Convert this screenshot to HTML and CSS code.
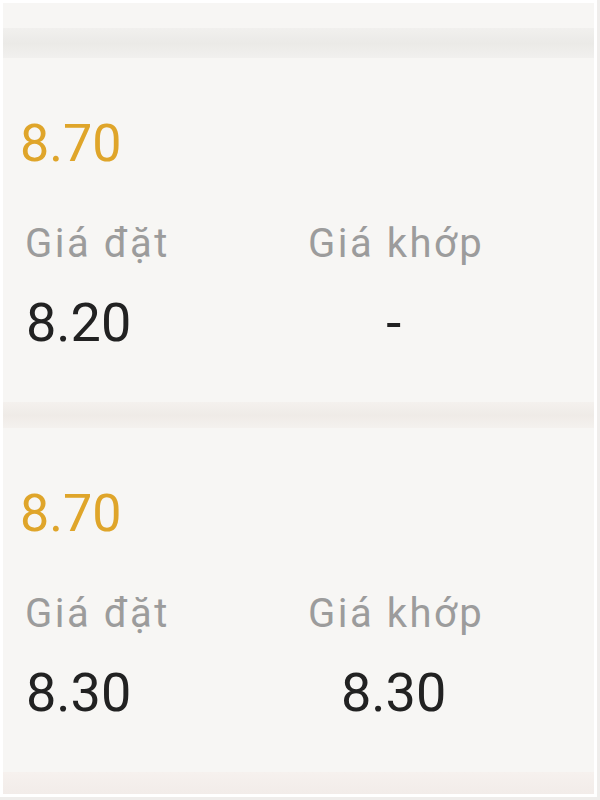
FILE: index.html
```html
<!DOCTYPE html>
<html lang="vi">

<head>
    <meta charset="UTF-8">
    <meta name="viewport" content="width=device-width, initial-scale=1.0">
    <title>Lệnh đặt</title>
    <link rel="stylesheet" href="styles.css">
</head>

<body>
    <div class="frame">
        <div class="top-space"></div>
        <div class="divider"></div>

        <!-- Lệnh 1 -->
        <div class="order">
            <div class="price">8.70</div>
            <div class="fields">
                <div class="field">
                    <div class="label">Giá đặt</div>
                    <div class="value">8.20</div>
                </div>
                <div class="field center">
                    <div class="label">Giá khớp</div>
                    <div class="value">-</div>
                </div>
            </div>
        </div>
        <div class="divider small"></div>

        <!-- Lệnh 2 -->
        <div class="order">
            <div class="price">8.70</div>
            <div class="fields">
                <div class="field">
                    <div class="label">Giá đặt</div>
                    <div class="value">8.30</div>
                </div>
                <div class="field center">
                    <div class="label">Giá khớp</div>
                    <div class="value">8.30</div>
                </div>
            </div>
        </div>
        <div class="divider last"></div>
    </div>
</body>

</html>
```

FILE: styles.css
```css
body {
    margin: 0;
    padding: 0 3px 3px 0;
    background-color: #efedeb;
    font-family: Roboto, "Liberation Sans", sans-serif;
}

.frame {
    border: 3px solid #ffffff;
    background-color: #f7f6f4;
    display: flex;
    flex-direction: column;
}

.top-space {
    height: 25px;
}

.divider {
    height: 30px;
    background: linear-gradient(to bottom, #f1f0ee, #ebeae7 50%, #f1f0ee);
}

.divider.small {
    height: 26px;
    background: linear-gradient(to bottom, #f4f1ee, #efebe7 50%, #f4f1ee);
}

.divider.last {
    height: 22px;
    background: linear-gradient(to bottom, #f6f1ee, #f2ece9);
}

.order {
    padding: 60px 0 52px 17px;
}

.price {
    font-size: 52px;
    line-height: 52px;
    color: #dfa52a;
}

.fields {
    display: grid;
    grid-template-columns: 283px max-content;
    margin-top: 54px;
}

.field.center {
    text-align: center;
}

.label {
    font-size: 40px;
    line-height: 40px;
    color: #9c9c9c;
    letter-spacing: 2.5px;
    margin-left: 5px;
}

.value {
    font-size: 54px;
    line-height: 54px;
    color: #222222;
    margin-top: 32px;
    margin-left: 6px;
}

.field.center .value {
    margin-left: 0;
}
```
